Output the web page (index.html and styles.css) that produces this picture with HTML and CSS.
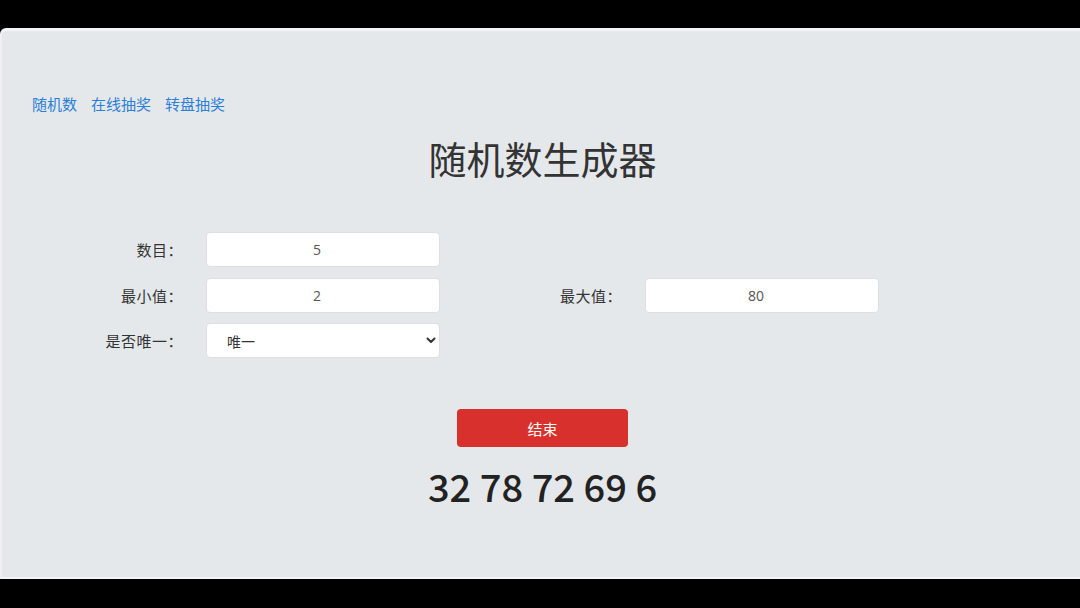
FILE: index.html
```html
<!DOCTYPE html>
<html>
<head>
    <meta charset="utf-8">
    <title>随机数生成器</title>
    <link rel="stylesheet" href="styles.css">
</head>
<body>
    <div class="screen">
        <div class="nav">
            <a href="#">随机数</a>
            <a href="#">在线抽奖</a>
            <a href="#">转盘抽奖</a>
        </div>

        <h1 class="title">随机数生成器</h1>

        <form class="form">
            <label class="form-label" for="count">数目：</label>
            <input class="form-input" type="text" id="count" value="5">
            <span></span>
            <span></span>

            <label class="form-label" for="min">最小值：</label>
            <input class="form-input" type="text" id="min" value="2">
            <label class="form-label" for="max">最大值：</label>
            <input class="form-input" type="text" id="max" value="80">

            <label class="form-label" for="unique">是否唯一：</label>
            <div class="select-wrap">
                <select class="form-select" id="unique">
                    <option>唯一</option>
                    <option>不唯一</option>
                </select>
                <svg class="select-arrow" width="10" height="7" viewBox="0 0 10 7">
                    <path d="M1.5 1.5 L5 5 L8.5 1.5" fill="none" stroke="#333" stroke-width="2" stroke-linecap="round" stroke-linejoin="round"/>
                </svg>
            </div>
        </form>

        <div class="actions">
            <button type="button" class="btn-stop">结束</button>
        </div>

        <div class="result">32 78 72 69 6</div>
    </div>
</body>
</html>
```

FILE: styles.css
```css
html, body {
    margin: 0;
    padding: 0;
}

body {
    background-color: #000;
    font-family: "Noto Sans CJK SC", "Noto Sans", sans-serif;
    padding-top: 28px;
    height: 608px;
    box-sizing: border-box;
}

.screen {
    height: 551px;
    box-sizing: border-box;
    background-color: #e5e8eb;
    border-top: 3px solid #f3f4f5;
    border-bottom: 2px solid #f3f4f5;
    border-left: 2px solid #eef0f2;
    border-top-left-radius: 6px;
    overflow: hidden;
}

.nav {
    margin-top: 62px;
    padding-left: 30px;
    display: flex;
    gap: 14px;
    font-size: 15px;
    line-height: 22px;
}

.nav a {
    color: #2a7fd6;
    text-decoration: none;
}

.title {
    margin: 20px 0 0;
    text-align: center;
    padding-left: 3px;
    font-size: 38px;
    font-weight: normal;
    line-height: 46px;
    color: #333;
}

.form {
    margin-top: 51px;
    display: grid;
    grid-template-columns: 181px 234px 159px 234px;
    grid-auto-rows: 35px;
    column-gap: 23px;
    row-gap: 10.5px;
}

.form-label {
    text-align: right;
    align-self: center;
    font-size: 15px;
    letter-spacing: 0.5px;
    color: #333;
}

.form-input,
.form-select {
    width: 100%;
    height: 35px;
    box-sizing: border-box;
    border: 1px solid #dcdfe3;
    border-radius: 4px;
    background-color: #fff;
    font-family: "Open Sans", "Noto Sans CJK SC", sans-serif;
    font-size: 14px;
    color: #555;
    outline: none;
}

.form-input {
    text-align: center;
    padding: 0 12px 0 0;
}

.select-wrap {
    position: relative;
}

.form-select {
    appearance: none;
    -webkit-appearance: none;
    padding-left: 20px;
    font-family: "Noto Sans CJK SC", sans-serif;
    color: #333;
}

.select-arrow {
    position: absolute;
    right: 4px;
    top: 14px;
    pointer-events: none;
}

.actions {
    margin-top: 51px;
    display: flex;
    justify-content: center;
    padding-left: 3px;
}

.btn-stop {
    width: 171px;
    height: 38px;
    border: none;
    border-radius: 4px;
    background-color: #d8302d;
    color: #fff;
    font-family: "Noto Sans CJK SC", sans-serif;
    font-size: 15px;
    cursor: pointer;
}

.result {
    margin-top: 16px;
    text-align: center;
    padding-left: 3px;
    font-size: 38px;
    font-weight: 500;
    line-height: 46px;
    color: #222;
}
```
